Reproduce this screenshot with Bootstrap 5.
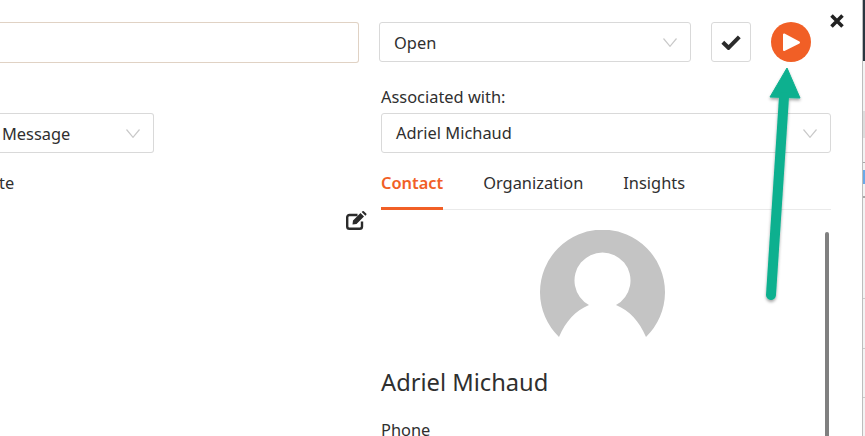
<!DOCTYPE html>
<html lang="en">
<head>
  <meta charset="UTF-8" />
  <title>Conversation panel</title>
  <link href="https://cdn.jsdelivr.net/npm/bootstrap@5.3.3/dist/css/bootstrap.min.css" rel="stylesheet">
  <style>
    html, body { height: 436px; overflow: hidden; }
    body { background: #fff; color: #2f2f2f; font-family: "Noto Sans", "Open Sans", sans-serif; font-size: 16.4px; position: relative; }
    .panel-wrap { width: 862px; height: 436px; overflow: hidden; position: relative; display: flex; }
    .left-col { width: 359px; flex: none; padding-top: 22px; }
    .right-col { width: 472px; flex: none; margin-left: 20px; padding-top: 22px; }
    .subject-box { height: 41px; border: 1px solid #e0d2c4; border-radius: 3px; border-left: 0; border-top-left-radius: 0; border-bottom-left-radius: 0; }
    .fake-select { height: 40px; border: 1px solid #d9d9d9; border-radius: 3px; display: flex; align-items: center; justify-content: space-between; padding: 0 13px 0 14px; background: #fff; }
    .fake-select svg { width: 14px; height: 9px; flex: none; }
    .msg-select { width: 154px; margin-top: 50px; border-left: 0; border-top-left-radius: 0; border-bottom-left-radius: 0; padding-left: 2px; }
    .msg-select span { padding-top: 2px; }
    .note-label { margin-top: 19px; line-height: 22px; margin-left: -1px; }
    .edit-row { display: flex; justify-content: flex-end; margin-top: 17px; margin-right: -8px; }
    .top-row { display: flex; }
    .status-select { width: 312px; height: 40px; }
    .status-select span { padding-top: 2px; }
    .check-btn { width: 40px; height: 40px; margin-left: 20px; border: 1px solid #d9d9d9; border-radius: 3px; background: #fff; padding: 0; display: flex; align-items: center; justify-content: center; }
    .play-btn { width: 40px; height: 40px; margin-left: 20px; border-radius: 50%; background: #f15f26; border: 0; padding: 0; display: flex; align-items: center; justify-content: center; }
    .assoc-label { margin: 24px 0 0 0; line-height: 22px; height: 27px; padding-left: 2px; }
    .assoc-select { width: 450px; margin-left: 2px; padding-left: 14px; }
    .tab-strip { display: flex; gap: 40px; width: 450px; margin-left: 2px; margin-top: 10px; border-bottom: 1px solid #eaeaea; height: 47px; }
    .tab-item { line-height: 39px; color: #2f2f2f; text-decoration: none; height: 47px; }
    .tab-item.is-on { color: #f15f26; font-weight: 600; border-bottom: 3px solid #f15f26; }
    .contact-pane { width: 450px; margin-left: 2px; }
    .avatar-holder { display: flex; justify-content: center; margin-top: 20px; padding-right: 7px; }
    .contact-name { font-size: 23.7px; font-weight: 400; line-height: 32px; margin: 28px 0 0; }
    .field-label { margin-top: 21px; line-height: 22px; }
    .scroll-thumb { position: absolute; left: 825px; top: 232px; width: 4px; height: 204px; border-radius: 2px 2px 0 0; background: #808080; }
    .close-x { position: absolute; left: 829px; top: 13px; width: 16px; height: 16px; }
    .arrow-over { position: absolute; left: 755px; top: 65px; width: 60px; height: 245px; }
    .behind-edge { position: absolute; left: 862px; top: 0; width: 3px; height: 436px; background: #f3f3f3; border-left: 1px solid #bdbdbd; }
    .behind-edge i { display: block; position: absolute; left: 0; right: 0; height: 1px; background: #c9c9c9; }
    .edge-dark { top: 0; height: 61px !important; background: #2b3640 !important; }
    .edge-band { top: 111px; height: 27px !important; background: #dcdcdc !important; }
    .edge-a { top: 162px; background: #a8a8a8 !important; }
    .edge-b { top: 170px; height: 14px !important; background: #6aa9e8 !important; }
    .edge-c { top: 196px; height: 2px !important; background: #a8a8a8 !important; }
    .edge-d { top: 298px; }
    .edge-e { top: 348px; }
    .edge-f { top: 397px; }
  </style>
</head>
<body>
  <div class="panel-wrap">
    <!-- left column, cut off by the window -->
    <div class="left-col">
      <div class="subject-box"></div>
      <div class="fake-select msg-select">
        <span>Message</span>
        <svg viewBox="0 0 14 9"><path d="M.5.5 7 8.300 13.500.5" fill="none" stroke="#c9c9c9" stroke-width="1.200"/></svg>
      </div>
      <div class="note-label">te</div>
      <div class="edit-row">
        <svg width="21" height="19" viewBox="0 0 21 19">
          <path d="M11.500 4H3.500A2.300 2.300 0 0 0 1.200 6.300v9.200a2.300 2.300 0 0 0 2.300 2.300h10.200a2.300 2.300 0 0 0 2.300-2.300V10.500" fill="none" stroke="#2b2b2b" stroke-width="2.400"/>
          <path d="M7 9.500 14.500 2l3.500 3.500L10.500 13l-4 .6zM15.700.9l.8-.6a1 1 0 0 1 1.300 0l2.400 2.300a1 1 0 0 1 0 1.300l-.8.800z" fill="#2b2b2b"/>
        </svg>
      </div>
    </div>

    <!-- right column -->
    <div class="right-col">
      <div class="top-row">
        <div class="fake-select status-select">
          <span>Open</span>
          <svg viewBox="0 0 14 9"><path d="M.5.5 7 8.300 13.500.5" fill="none" stroke="#c9c9c9" stroke-width="1.200"/></svg>
        </div>
        <button class="check-btn" type="button" aria-label="Resolve">
          <svg width="20" height="16" viewBox="0 0 20 16"><path d="M1.800 8.200 7.500 13.800 18.300 2.800" fill="none" stroke="#2b2b2b" stroke-width="4"/></svg>
        </button>
        <button class="play-btn" type="button" aria-label="Start">
          <svg width="24" height="24" viewBox="0 0 24 24"><path d="M5 4.500v15.500L20 12.500z" fill="#fff" stroke="#fff" stroke-width="2" stroke-linejoin="round"/></svg>
        </button>
      </div>
      <div class="assoc-label">Associated with:</div>
      <div class="fake-select assoc-select">
        <span>Adriel Michaud</span>
        <svg viewBox="0 0 14 9"><path d="M.5.5 7 8.300 13.500.5" fill="none" stroke="#c9c9c9" stroke-width="1.200"/></svg>
      </div>
      <div class="tab-strip">
        <a class="tab-item is-on" href="#">Contact</a>
        <a class="tab-item" href="#">Organization</a>
        <a class="tab-item" href="#">Insights</a>
      </div>
      <div class="contact-pane">
        <div class="avatar-holder">
          <svg width="125" height="108" viewBox="0 0 125 108">
            <path d="M19 107A62.500 62.500 0 1 1 106 107C99 91 90 81 76 75A28 28 0 1 0 49 75C35 81 26 91 19 107z" fill="#c4c4c4"/>
          </svg>
        </div>
        <h4 class="contact-name">Adriel Michaud</h4>
        <div class="field-label">Phone</div>
      </div>
    </div>
  </div>

  <div class="scroll-thumb"></div>
  <svg class="close-x" viewBox="0 0 16 16"><path d="M2.500 2.500l11 11M13.500 2.500l-11 11" stroke="#222" stroke-width="3.600" fill="none"/></svg>
  <svg class="arrow-over" viewBox="0 0 60 245">
    <defs><filter id="arrow-shade" x="-30%" y="-10%" width="160%" height="120%"><feDropShadow dx="0" dy="2" stdDeviation="1.500" flood-color="#000" flood-opacity=".35"/></filter></defs>
    <g filter="url(#arrow-shade)">
      <path d="M15 32 32 3 45 33z" fill="#0bb08f" stroke="#0bb08f" stroke-linejoin="round"/>
      <path d="M29 32 16 230" stroke="#0bb08f" stroke-width="10" stroke-linecap="round" fill="none"/>
    </g>
  </svg>
  <div class="behind-edge">
    <i class="edge-dark"></i><i class="edge-band"></i><i class="edge-a"></i><i class="edge-b"></i><i class="edge-c"></i><i class="edge-d"></i><i class="edge-e"></i><i class="edge-f"></i>
  </div>
  <script src="https://cdn.jsdelivr.net/npm/bootstrap@5.3.3/dist/js/bootstrap.bundle.min.js"></script>
</body>
</html>
